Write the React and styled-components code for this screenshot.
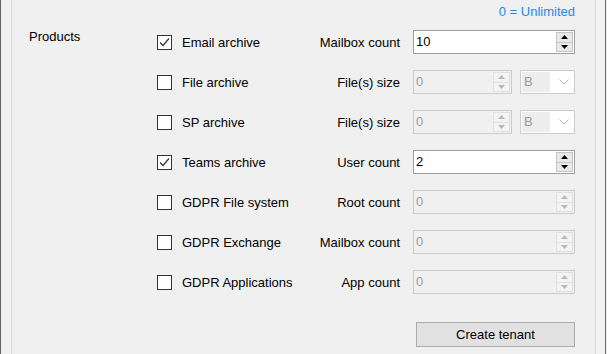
import React from "react";
import styled, { createGlobalStyle } from "styled-components";

const Global = createGlobalStyle`
  html, body { margin: 0; padding: 0; background: #f0f0f0; }
  body { font-family: "Liberation Sans", Arial, sans-serif; font-size: 13px; color: #000; }
`;

const Window = styled.div`
  width: 607px;
  height: 354px;
  display: flex;
  overflow: hidden;
  background: #f0f0f0;
`;

const LeftRule = styled.div`
  width: 1px;
  background: #646464;
`;

const Gutter = styled.div`
  width: 10px;
`;

const GroupBox = styled.div`
  width: 585px;
  box-sizing: border-box;
  border-left: 1px solid #dcdcdc;
  border-right: 1px solid #dcdcdc;
  padding: 0 20px 0 17px;
  display: flex;
  flex-direction: column;
`;

const RightStrip = styled.div`
  width: 9px;
  background: #f2f2f2;
`;

const RightRule = styled.div`
  width: 1px;
  background: #6b6b6b;
`;

const Header = styled.div`
  height: 22px;
  line-height: 22px;
  padding-top: 1px;
  box-sizing: border-box;
  text-align: right;
  color: #1e88e5;
`;

const Grid = styled.div`
  display: grid;
  grid-template-columns: 128px 150px 106px 162px;
  grid-auto-rows: 40px;
  align-items: center;
`;

const SectionLabel = styled.div`
  align-self: start;
  margin-top: 7px;
  line-height: 15px;
`;

const CheckLabel = styled.label`
  grid-column: 2;
  display: flex;
  align-items: center;
  gap: 10px;
  line-height: 15px;
  white-space: nowrap;
`;

const Box = styled.span`
  width: 15px;
  height: 15px;
  box-sizing: border-box;
  border: 1px solid #333;
  background: #fff;
  display: flex;
  align-items: center;
  justify-content: center;
`;

const FieldLabel = styled.div`
  grid-column: 3;
  text-align: right;
  padding-right: 13px;
  white-space: nowrap;
  line-height: 15px;
`;

const Controls = styled.div`
  grid-column: 4;
  display: flex;
  gap: 8px;
  height: 24px;
`;

const Numeric = styled.div`
  flex: ${(p) => (p.$narrow ? "0 0 99px" : "1")};
  box-sizing: border-box;
  height: 24px;
  border: 1px solid ${(p) => (p.$disabled ? "#cccccc" : "#a0a0a0")};
  background: ${(p) => (p.$disabled ? "#f0f0f0" : "#ffffff")};
  display: flex;
  padding: 0 1px 0 2px;
  align-items: stretch;
`;

const Value = styled.div`
  flex: 1;
  line-height: 22px;
  color: ${(p) => (p.$disabled ? "#9a9a9a" : "#000")};
`;

const Spinner = styled.div`
  width: 17px;
  display: flex;
  flex-direction: column;
  padding: 1px 0;
  box-sizing: border-box;
`;

const SpinButton = styled.div`
  flex: 1;
  box-sizing: border-box;
  border: 1px solid ${(p) => (p.$disabled ? "#e0e0e0" : "#c6c6c6")};
  background: ${(p) => (p.$disabled ? "#f4f4f4" : "#e8e8e8")};
  display: flex;
  align-items: center;
  justify-content: center;
  & + & { border-top: none; }
`;

const Combo = styled.div`
  flex: 1;
  box-sizing: border-box;
  height: 24px;
  border: 1px solid #cccccc;
  background: #fff;
  display: flex;
  align-items: stretch;
  padding: 1px;
`;

const ComboText = styled.div`
  width: 28px;
  background: #ededed;
  color: #9a9a9a;
  line-height: 20px;
  padding-left: 2px;
  box-sizing: border-box;
`;

const ComboArrow = styled.div`
  flex: 1;
  display: flex;
  align-items: center;
  justify-content: center;
  padding-left: 4px;
`;

const ButtonRow = styled.div`
  display: flex;
  justify-content: flex-end;
  margin-top: 20px;
`;

const Button = styled.button`
  width: 159px;
  height: 25px;
  box-sizing: border-box;
  border: 1px solid #adadad;
  background: #e1e1e1;
  font-family: "Liberation Sans", Arial, sans-serif;
  font-size: 13px;
  color: #000;
  padding: 0;
`;

const Tri = ({ up, color }) => (
  <svg width="7" height="4" viewBox="0 0 7 4">
    <path d={up ? "M0 4 L3.5 0 L7 4 Z" : "M0 0 L3.5 4 L7 0 Z"} fill={color} />
  </svg>
);

const Check = () => (
  <svg width="13" height="13" viewBox="0 0 13 13">
    <path d="M2 6.5 L5 9.5 L11 2.5" fill="none" stroke="#333" strokeWidth="1.2" />
  </svg>
);

const NumericUpDown = ({ value, disabled, narrow }) => {
  const c = disabled ? "#b8b8b8" : "#000";
  return (
    <Numeric $disabled={disabled} $narrow={narrow}>
      <Value $disabled={disabled}>{value}</Value>
      <Spinner>
        <SpinButton $disabled={disabled}><Tri up color={c} /></SpinButton>
        <SpinButton $disabled={disabled}><Tri color={c} /></SpinButton>
      </Spinner>
    </Numeric>
  );
};

const SizeCombo = () => (
  <Combo>
    <ComboText>B</ComboText>
    <ComboArrow>
      <svg width="10" height="6" viewBox="0 0 10 6">
        <path d="M0.5 0.5 L5 5 L9.5 0.5" fill="none" stroke="#b5b5b5" strokeWidth="1" />
      </svg>
    </ComboArrow>
  </Combo>
);

const rows = [
  { name: "Email archive", checked: true, label: "Mailbox count", value: "10" },
  { name: "File archive", label: "File(s) size", value: "0", size: true },
  { name: "SP archive", label: "File(s) size", value: "0", size: true },
  { name: "Teams archive", checked: true, label: "User count", value: "2" },
  { name: "GDPR File system", label: "Root count", value: "0" },
  { name: "GDPR Exchange", label: "Mailbox count", value: "0" },
  { name: "GDPR Applications", label: "App count", value: "0" },
];

export default function App() {
  return (
    <>
      <Global />
      <Window>
        <LeftRule />
        <Gutter />
        <GroupBox>
          <Header>0 = Unlimited</Header>
          <Grid>
            <SectionLabel>Products</SectionLabel>
            {rows.map((r, i) => (
              <React.Fragment key={i}>
                <CheckLabel style={{ gridRow: i + 1 }}>
                  <Box>{r.checked && <Check />}</Box>
                  {r.name}
                </CheckLabel>
                <FieldLabel style={{ gridRow: i + 1 }}>{r.label}</FieldLabel>
                <Controls style={{ gridRow: i + 1 }}>
                  <NumericUpDown value={r.value} disabled={!r.checked} narrow={r.size} />
                  {r.size && <SizeCombo />}
                </Controls>
              </React.Fragment>
            ))}
          </Grid>
          <ButtonRow>
            <Button>Create tenant</Button>
          </ButtonRow>
        </GroupBox>
        <RightStrip />
        <RightRule />
      </Window>
    </>
  );
}
